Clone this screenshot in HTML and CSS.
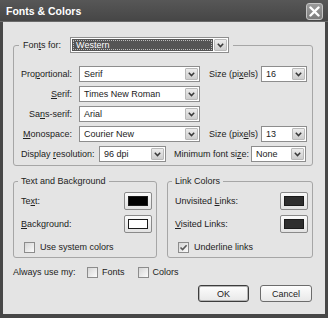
FILE: index.html
```html
<!DOCTYPE html>
<html>
<head>
<meta charset="utf-8">
<title>Fonts &amp; Colors</title>
<link rel="stylesheet" href="styles.css">
</head>
<body>
<div class="window">
  <div class="titlebar">
    <span class="title">Fonts &amp; Colors</span>
    <span class="close"><svg width="11" height="11" viewBox="0 0 11 11"><path d="M1.5 1.5 L9.5 9.5 M9.5 1.5 L1.5 9.5" stroke="#fff" stroke-width="2.4" stroke-linecap="round"/></svg></span>
  </div>
  <div class="body">
    <fieldset class="group fonts">
      <legend class="legend-fonts">
        <span class="legend-lbl">Fon<u>t</u>s for:</span>
        <div class="select dark western"><span class="val"><span class="focus">Western</span></span><span class="arrow"><svg width="7" height="5" viewBox="0 0 7 5"><path d="M0.8 0.8 L3.5 3.6 L6.2 0.8" stroke="#3a3a3a" stroke-width="1.5" fill="none"/></svg></span></div>
      </legend>
      <div class="row">
        <span class="lbl">Pro<u>p</u>ortional:</span>
        <div class="select main"><span class="val">Serif</span><span class="arrow"><svg width="7" height="5" viewBox="0 0 7 5"><path d="M0.8 0.8 L3.5 3.6 L6.2 0.8" stroke="#3a3a3a" stroke-width="1.5" fill="none"/></svg></span></div>
        <span class="size-lbl">Size (pi<u>x</u>els)</span>
        <div class="select size"><span class="val">16</span><span class="arrow"><svg width="7" height="5" viewBox="0 0 7 5"><path d="M0.8 0.8 L3.5 3.6 L6.2 0.8" stroke="#3a3a3a" stroke-width="1.5" fill="none"/></svg></span></div>
      </div>
      <div class="row">
        <span class="lbl"><u>S</u>erif:</span>
        <div class="select main"><span class="val">Times New Roman</span><span class="arrow"><svg width="7" height="5" viewBox="0 0 7 5"><path d="M0.8 0.8 L3.5 3.6 L6.2 0.8" stroke="#3a3a3a" stroke-width="1.5" fill="none"/></svg></span></div>
      </div>
      <div class="row">
        <span class="lbl">Sa<u>n</u>s-serif:</span>
        <div class="select main"><span class="val">Arial</span><span class="arrow"><svg width="7" height="5" viewBox="0 0 7 5"><path d="M0.8 0.8 L3.5 3.6 L6.2 0.8" stroke="#3a3a3a" stroke-width="1.5" fill="none"/></svg></span></div>
      </div>
      <div class="row">
        <span class="lbl"><u>M</u>onospace:</span>
        <div class="select main"><span class="val">Courier New</span><span class="arrow"><svg width="7" height="5" viewBox="0 0 7 5"><path d="M0.8 0.8 L3.5 3.6 L6.2 0.8" stroke="#3a3a3a" stroke-width="1.5" fill="none"/></svg></span></div>
        <span class="size-lbl">Size (pix<u>e</u>ls)</span>
        <div class="select size"><span class="val">13</span><span class="arrow"><svg width="7" height="5" viewBox="0 0 7 5"><path d="M0.8 0.8 L3.5 3.6 L6.2 0.8" stroke="#3a3a3a" stroke-width="1.5" fill="none"/></svg></span></div>
      </div>
      <div class="row">
        <span class="lbl-res">Display <u>r</u>esolution:</span>
        <div class="select res"><span class="val">96 dpi</span><span class="arrow"><svg width="7" height="5" viewBox="0 0 7 5"><path d="M0.8 0.8 L3.5 3.6 L6.2 0.8" stroke="#3a3a3a" stroke-width="1.5" fill="none"/></svg></span></div>
        <span class="min-lbl">Minimum font si<u>z</u>e:</span>
        <div class="select none"><span class="val">None</span><span class="arrow"><svg width="7" height="5" viewBox="0 0 7 5"><path d="M0.8 0.8 L3.5 3.6 L6.2 0.8" stroke="#3a3a3a" stroke-width="1.5" fill="none"/></svg></span></div>
      </div>
    </fieldset>

    <div class="groups">
      <fieldset class="group colors">
        <legend class="legend-text">Text and Background</legend>
        <div class="crow">
          <span>Te<u>x</u>t:</span>
          <span class="cbtn"><span class="swatch sw-black"></span></span>
        </div>
        <div class="crow">
          <span><u>B</u>ackground:</span>
          <span class="cbtn"><span class="swatch sw-white"></span></span>
        </div>
        <div class="chkrow">
          <span class="chk"></span>
          <span>Use system colors</span>
        </div>
      </fieldset>
      <fieldset class="group links">
        <legend class="legend-text">Link Colors</legend>
        <div class="crow">
          <span>Unvisited <u>L</u>inks:</span>
          <span class="cbtn"><span class="swatch sw-dark"></span></span>
        </div>
        <div class="crow">
          <span><u>V</u>isited Links:</span>
          <span class="cbtn"><span class="swatch sw-dark"></span></span>
        </div>
        <div class="chkrow">
          <span class="chk"><svg width="9" height="9" viewBox="0 0 9 9"><path d="M1.5 4.5 L3.6 6.6 L7.6 2.2" stroke="#5a5a5a" stroke-width="1.6" fill="none"/></svg></span>
          <span>Underline links</span>
        </div>
      </fieldset>
    </div>

    <div class="always">
      <span class="always-lbl">Always use my:</span>
      <span class="chk"></span>
      <span class="chk-txt">Fonts</span>
      <span class="chk chk2"></span>
      <span class="chk-txt">Colors</span>
    </div>

    <div class="buttons">
      <span class="btn default">OK</span>
      <span class="btn cancel">Cancel</span>
    </div>
  </div>
</div>
</body>
</html>
```
FILE: styles.css
```css
* { box-sizing: border-box; }
html, body { margin: 0; padding: 0; }
body {
  width: 328px;
  height: 318px;
  overflow: hidden;
  font-family: "Liberation Sans", Arial, sans-serif;
  font-size: 9px;
  color: #222;
  background: #fff;
}
u { text-decoration: underline; text-underline-offset: 1px; }

.window {
  width: 328px;
  height: 318px;
  display: flex;
  flex-direction: column;
}
.titlebar {
  height: 22px;
  flex: 0 0 22px;
  display: flex;
  align-items: center;
  justify-content: space-between;
  padding: 1px 5px 0 6px;
  background: linear-gradient(#575757, #464646);
  border-bottom: 1px solid #6a6a6a;
}
.title {
  color: #fff;
  font-weight: bold;
  font-size: 10.5px;
}
.close {
  width: 17px;
  height: 17px;
  border: 1px solid #c4c4c4;
  border-radius: 3px;
  background: linear-gradient(#9a9a9a, #7d7d7d);
  display: flex;
  align-items: center;
  justify-content: center;
}

.body {
  flex: 1;
  background: #e4e4e4;
  border-style: solid;
  border-color: #474747;
  border-width: 0 3px 4px 3px;
  padding: 15px 12px 0 10px;
}

.group {
  margin: 0;
  border: 1px solid #a6a6a6;
  border-radius: 3px;
  min-width: 0;
}
.fonts {
  padding: 13px 5px 3px 7px;
}
.legend-fonts {
  display: flex;
  align-items: center;
  padding: 0 4px;
  margin-left: -2px;
  height: 16px;
}
.legend-lbl { margin-right: 9px; }

.row {
  display: flex;
  align-items: center;
  height: 16px;
  margin-top: 4px;
}
.fonts > .row:first-of-type { margin-top: 0; }
.lbl {
  width: 51px;
  text-align: right;
  margin-right: 7px;
  white-space: nowrap;
}
.lbl-res {
  width: 71px;
  margin-right: 7px;
  white-space: nowrap;
}
.size-lbl {
  margin-left: 9px;
  white-space: nowrap;
}
.min-lbl {
  margin-left: 8px;
  white-space: nowrap;
}

.select {
  display: flex;
  height: 16px;
  border: 1px solid #8d8d8d;
  background: #fff;
  padding: 1px;
}
.select .val {
  flex: 1;
  padding-left: 3px;
  line-height: 12px;
  white-space: nowrap;
  overflow: hidden;
}
.select .arrow {
  width: 13px;
  flex: 0 0 13px;
  border: 1px solid #b9b9b9;
  border-radius: 1px;
  background: linear-gradient(#ececec, #cdcdcd);
  display: flex;
  align-items: center;
  justify-content: center;
}
.western { width: 159px; }
.dark .val {
  background: #555;
  color: #fff;
  padding: 1px;
  margin-right: 1px;
}
.dark .focus {
  display: block;
  height: 10px;
  line-height: 9px;
  padding-left: 2px;
  border: 1px dotted #bdbdbd;
}
.main { width: 121px; }
.size { width: 46px; margin-left: auto; }
.res { width: 67px; }
.none { width: 55px; margin-left: auto; margin-right: 1px; }

.groups {
  display: flex;
  gap: 10px;
  margin-top: 9px;
}
.colors { flex: 0 0 144px; padding: 5px 4px 4px 7px; }
.links { flex: 1; padding: 5px 4px 4px 7px; }
.legend-text {
  padding: 0 3px;
  margin-left: -3px;
  line-height: 12px;
}
.crow {
  display: flex;
  align-items: center;
  justify-content: space-between;
  height: 18px;
  margin-top: 5px;
}
.crow:first-of-type { margin-top: 0; }
.cbtn {
  width: 28px;
  height: 18px;
  border: 1px solid #8a8a8a;
  border-radius: 2px;
  background: linear-gradient(#fafafa, #e2e2e2);
  padding: 3px;
  display: flex;
}
.swatch {
  flex: 1;
  border: 1px solid #1a1a1a;
}
.sw-black { background: #000; }
.sw-white { background: #fff; }
.sw-dark { background: #2e2e2e; }

.chkrow {
  display: flex;
  align-items: center;
  height: 12px;
  margin-top: 8px;
  margin-left: 3px;
}
.chk {
  width: 11px;
  height: 11px;
  flex: 0 0 11px;
  border: 1px solid #8c8c8c;
  background: linear-gradient(135deg, #d6d6d6, #fbfbfb);
  display: flex;
  align-items: center;
  justify-content: center;
  margin-right: 5px;
}

.always {
  display: flex;
  align-items: center;
  height: 12px;
  margin-top: 8px;
}
.always-lbl { width: 74px; white-space: nowrap; }
.chk-txt { white-space: nowrap; }
.always .chk { margin-right: 4px; }
.always .chk2 { margin-left: 13px; }

.buttons {
  display: flex;
  justify-content: flex-end;
  gap: 11px;
  margin-top: 7px;
  padding-right: 1px;
}
.btn {
  height: 17px;
  border: 1px solid #6c6c6c;
  border-radius: 3px;
  background: linear-gradient(#fdfdfd, #e8e8e8);
  display: flex;
  align-items: center;
  justify-content: center;
}
.default {
  width: 51px;
  border-color: #3c3c3c;
  box-shadow: inset 0 0 0 1px #b4b4b4;
}
.cancel { width: 52px; }
```
